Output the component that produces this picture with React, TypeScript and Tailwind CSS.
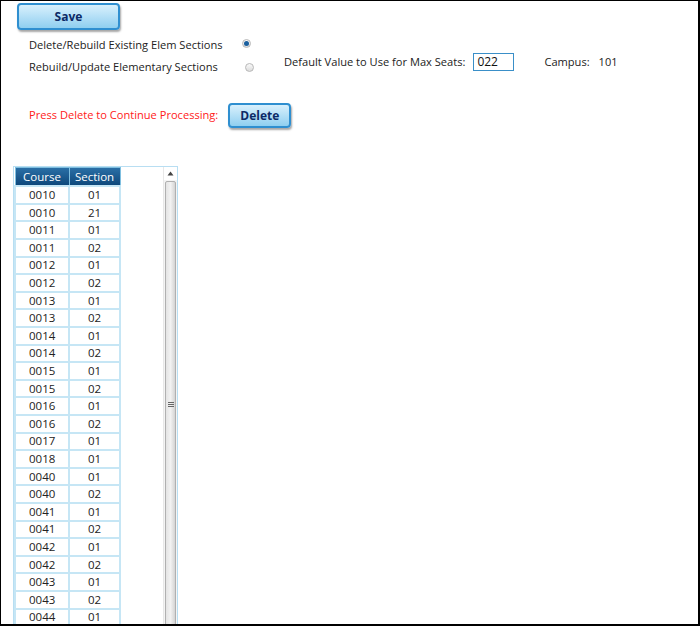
import React from "react";

const rows: [string, string][] = [
  ["0010", "01"],
  ["0010", "21"],
  ["0011", "01"],
  ["0011", "02"],
  ["0012", "01"],
  ["0012", "02"],
  ["0013", "01"],
  ["0013", "02"],
  ["0014", "01"],
  ["0014", "02"],
  ["0015", "01"],
  ["0015", "02"],
  ["0016", "01"],
  ["0016", "02"],
  ["0017", "01"],
  ["0018", "01"],
  ["0040", "01"],
  ["0040", "02"],
  ["0041", "01"],
  ["0041", "02"],
  ["0042", "01"],
  ["0042", "02"],
  ["0043", "01"],
  ["0043", "02"],
  ["0044", "01"],
];

function BlueButton({ label, className }: { label: string; className: string }) {
  return (
    <button
      className={
        "rounded-[4px] border-2 border-[#2f8fd0] bg-gradient-to-b from-[#d8f0fc] to-[#8fcff0] text-[12px] font-bold text-[#0c2a66] shadow-[1px_2px_2px_rgba(0,0,0,0.35)] " +
        className
      }
    >
      {label}
    </button>
  );
}

function Radio({ checked }: { checked?: boolean }) {
  return (
    <span className="flex h-[9px] w-[9px] items-center justify-center rounded-full border border-[#b8b8b8] bg-gradient-to-b from-[#fafafa] to-[#dcdcdc]">
      {checked && <span className="h-[5px] w-[5px] rounded-full bg-[#1a5f9e]" />}
    </span>
  );
}

export default function App() {
  return (
    <div
      className="flex h-[626px] w-[700px] flex-col overflow-hidden border-t border-l border-r-2 border-b-2 border-black bg-white text-[11.1px] text-[#222]"
      style={{ fontFamily: '"Open Sans", "Liberation Sans", sans-serif' }}
    >
      <div className="pl-[16px] pt-[2px]">
        <BlueButton label="Save" className="h-[27px] w-[103px]" />
      </div>

      <div className="flex pl-[28px] pt-[7px]">
        <div className="flex w-[226px] flex-col gap-[6px]">
          <div className="flex h-[16px] items-center justify-between">
            <span>Delete/Rebuild Existing Elem Sections</span>
            <span className="-mt-[3px] mr-[4px]">
              <Radio checked />
            </span>
          </div>
          <div className="flex h-[16px] items-center justify-between">
            <span>Rebuild/Update Elementary Sections</span>
            <span className="mr-[1px]">
              <Radio />
            </span>
          </div>
        </div>
        <div className="ml-[29px] mt-[16px] flex h-[18px] items-center">
          <span>Default Value to Use for Max Seats:</span>
          <input
            defaultValue="022"
            className="ml-[8px] h-[18px] w-[41px] border border-[#3a8fc8] px-[3px] text-[12px] text-[#111] outline-none"
          />
          <span className="ml-[30px]">Campus:</span>
          <span className="ml-[9px] text-[11px]">101</span>
        </div>
      </div>

      <div className="mt-[28px] flex items-center pl-[28px]">
        <span className="text-[#ff2020]">Press Delete to Continue Processing:</span>
        <BlueButton label="Delete" className="ml-[10px] h-[25px] w-[63px]" />
      </div>

      <div className="ml-[12px] mt-[38px] flex w-[165px] flex-1 border-t border-l border-r border-[#b8def2]">
        <div className="flex-1">
          <table className="w-[107px] border-collapse text-[11.5px]">
            <thead>
              <tr className="h-[18px] bg-gradient-to-b from-[#2a6fa6] to-[#0b4477] text-white">
                <th className="w-[54px] border border-[#7fbfe0] font-normal">Course</th>
                <th className="border border-[#7fbfe0] font-normal">Section</th>
              </tr>
            </thead>
            <tbody>
              {rows.map(([c, s], i) => (
                <tr key={i} className="h-[17.6px]">
                  <td className="border-2 border-[#c6e6f5] pl-[13px] leading-[14px] text-left">{c}</td>
                  <td className="border-2 border-[#c6e6f5] pl-[18px] leading-[14px] text-left">{s}</td>
                </tr>
              ))}
            </tbody>
          </table>
        </div>
        <div className="flex w-[14px] flex-col border-l border-[#e8e8e8] bg-[#f4f4f4]">
          <div className="flex h-[13px] items-center justify-center bg-white">
            <svg width="7" height="5" viewBox="0 0 7 5">
              <path d="M3.5 0.5 L6.5 4.5 L0.5 4.5 Z" fill="#444" />
            </svg>
          </div>
          <div className="mx-[1px] mt-[1px] flex flex-1 items-center justify-center rounded-[2px] border border-[#b0b0b0] bg-gradient-to-r from-[#e4e4e4] via-[#f2f2f2] to-[#d4d4d4]">
            <div className="flex flex-col gap-[1px]">
              <span className="h-[1px] w-[6px] bg-[#666]" />
              <span className="h-[1px] w-[6px] bg-[#666]" />
              <span className="h-[1px] w-[6px] bg-[#666]" />
            </div>
          </div>
        </div>
      </div>
    </div>
  );
}
